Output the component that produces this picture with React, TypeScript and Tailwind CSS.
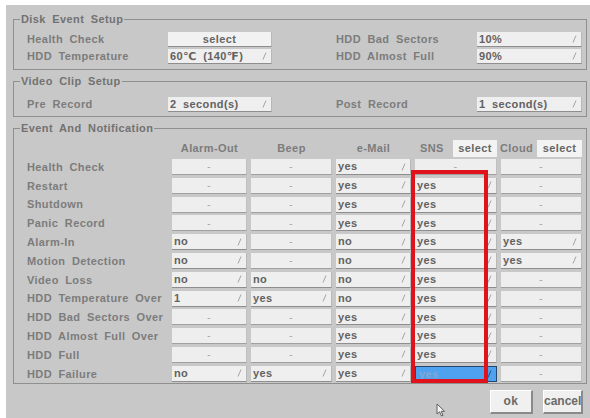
import React from "react";

type Cell = { v: string; dd?: boolean; sel?: boolean };

const D: Cell = { v: "-" };
const y: Cell = { v: "yes", dd: true };
const n: Cell = { v: "no", dd: true };

const rows: [string, Cell[]][] = [
  ["Health Check", [D, D, y, D, D]],
  ["Restart", [D, D, y, y, D]],
  ["Shutdown", [D, D, y, y, D]],
  ["Panic Record", [D, D, y, y, D]],
  ["Alarm-In", [n, D, n, y, y]],
  ["Motion Detection", [n, D, n, y, y]],
  ["Video Loss", [n, n, n, y, D]],
  ["HDD Temperature Over", [{ v: "1", dd: true }, y, n, y, D]],
  ["HDD Bad Sectors Over", [D, D, y, y, D]],
  ["HDD Almost Full Over", [D, D, y, y, D]],
  ["HDD Full", [D, D, y, y, D]],
  ["HDD Failure", [n, y, y, { v: "yes", dd: true, sel: true }, D]],
];

function Marker({ dark }: { dark?: boolean }) {
  return (
    <svg width="5" height="8" viewBox="0 0 5 8" className="absolute right-[4px] top-1/2 -translate-y-1/2">
      <line x1="1" y1="7.5" x2="4" y2="0.5" stroke={dark ? "#2c4f7a" : "#a4a4a4"} strokeWidth="1" />
    </svg>
  );
}

function Field({ c }: { c: Cell }) {
  if (c.sel) {
    return (
      <div className="relative flex h-full items-center border border-[#24466e] bg-[#4ea2ef] pl-[3px] text-[#86a6cf]">
        {c.v}
        <Marker dark />
      </div>
    );
  }
  if (c.dd) {
    return (
      <div className="relative flex h-full items-center border-b border-r border-b-[#8e8e8e] border-r-[#b8b8b8] bg-[#efefef] pl-[2px] text-[#626262]">
        {c.v}
        <Marker />
      </div>
    );
  }
  return (
    <div className="flex h-full items-center justify-center border-b border-r border-b-[#a0a0a0] border-r-[#c0c0c0] bg-[#eeeeee] font-normal text-[#a8a8a8]">
      -
    </div>
  );
}

function Legend({ children }: { children: React.ReactNode }) {
  return <legend className="px-[1px] text-[11px] leading-[13px] text-[#727272]">{children}</legend>;
}

const fs = "ml-[7px] mr-[3px] min-w-0 border border-[#8f8f8f] pl-[6px] pr-[4px]";

export default function App() {
  return (
    <div
      className="relative flex h-[418px] w-[590px] overflow-hidden bg-white pl-[6px] pt-[5px] text-[11px] font-bold tracking-[0.4px] [word-spacing:3px]"
      style={{ fontFamily: '"Liberation Sans", Arial, "DejaVu Sans", sans-serif' }}
    >
      <div className="flex min-w-0 flex-1 flex-col bg-[#c8c8c8] pt-[8px]">
        {/* Disk Event Setup */}
        <fieldset className={fs + " pb-[5px]"}>
          <Legend>Disk Event Setup</Legend>
          <div className="grid grid-cols-[141px_104px_64px_141px_105px] grid-rows-[15px_15px] gap-y-[2px] pl-[7px] pt-[6px] text-[#7c7c7c]">
            <div className="flex items-center">Health Check</div>
            <div className="flex items-center justify-center border-b border-r border-b-[#8e8e8e] border-r-[#b8b8b8] bg-[#f2f2f2] text-[#666666]">select</div>
            <div />
            <div className="flex items-center">HDD Bad Sectors</div>
            <Field c={{ v: "10%", dd: true }} />
            <div className="flex items-center">HDD Temperature</div>
            <Field c={{ v: "60℃ (140℉)", dd: true }} />
            <div />
            <div className="flex items-center">HDD Almost Full</div>
            <Field c={{ v: "90%", dd: true }} />
          </div>
        </fieldset>

        {/* Video Clip Setup */}
        <fieldset className={fs + " mt-[5px] pb-[4px]"}>
          <Legend>Video Clip Setup</Legend>
          <div className="grid grid-cols-[141px_104px_64px_141px_105px] grid-rows-[15px] pl-[7px] pt-[9px] text-[#7c7c7c]">
            <div className="flex items-center">Pre Record</div>
            <Field c={{ v: "2 second(s)", dd: true }} />
            <div />
            <div className="flex items-center">Post Record</div>
            <Field c={{ v: "1 second(s)", dd: true }} />
          </div>
        </fieldset>

        {/* Event And Notification */}
        <fieldset className={fs + " mt-[5px] pb-[1px]"}>
          <Legend>Event And Notification</Legend>
          <div className="pl-[7px] pt-[5px] text-[#7c7c7c]">
            <div className="mb-[5px] grid h-[14px] grid-cols-[141px_75px_81px_75px_82px_81px] gap-x-[4px]">
              <div />
              <div className="flex items-center justify-center">Alarm-Out</div>
              <div className="flex items-center justify-center">Beep</div>
              <div className="flex items-center justify-center">e-Mail</div>
              <div className="flex items-center">
                <span className="ml-[5px]">SNS</span>
                <span className="ml-auto flex h-full w-[44px] items-center justify-center bg-[#f3f3f3] text-[#666666]">select</span>
              </div>
              <div className="flex items-center">
                <span className="-ml-[1px]">Cloud</span>
                <span className="ml-auto flex h-full w-[45px] items-center justify-center bg-[#f3f3f3] text-[#666666]">select</span>
              </div>
            </div>
            <div className="grid auto-rows-[16px] grid-cols-[141px_75px_81px_75px_82px_81px] gap-x-[4px] gap-y-[2.8px]">
              {rows.map(([label, cells]) => (
                <React.Fragment key={label}>
                  <div className="flex items-center whitespace-nowrap">{label}</div>
                  {cells.map((c, i) => (
                    <Field key={i} c={c} />
                  ))}
                </React.Fragment>
              ))}
            </div>
          </div>
        </fieldset>

        {/* Buttons */}
        <div className="mr-[7px] mt-[6px] flex justify-end gap-[10px]">
          <button className="h-[24px] w-[43px] border-b-2 border-r-2 border-l border-t border-b-[#8a8a8a] border-l-white border-r-[#8a8a8a] border-t-white bg-[#f0f0f0] text-[12px] text-[#6a6a6a]">
            ok
          </button>
          <button className="h-[24px] w-[40px] border-b-2 border-r-2 border-l border-t border-b-[#8a8a8a] border-l-white border-r-[#8a8a8a] border-t-white bg-[#f0f0f0] text-[12px] tracking-[0px] text-[#6a6a6a]">
            cancel
          </button>
        </div>
      </div>

      {/* red highlight box */}
      <div className="pointer-events-none absolute left-[411px] top-[170px] h-[213px] w-[77px] border-[4px] border-[#e0121c]" />

      {/* mouse cursor */}
      <svg className="absolute left-[436px] top-[403px]" width="11" height="14" viewBox="0 0 11 14">
        <path d="M1 1 L1 11 L3.5 8.8 L5.5 13 L7 12.3 L5.2 8.3 L8.6 8.3 Z" fill="#f4f4f4" stroke="#606060" strokeWidth="1" strokeLinejoin="round" />
      </svg>
    </div>
  );
}
